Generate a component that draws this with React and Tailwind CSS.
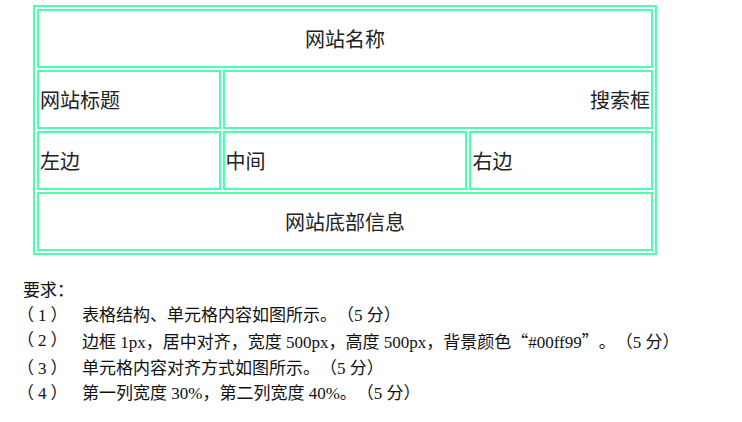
export default function App() {
  const cell = "border-2 border-[#4dffb0] p-0 align-middle";
  const cjk = { fontFamily: '"Noto Sans CJK SC", sans-serif' };
  const reqs = [
    ["（1）", <>表格结构、单元格内容如图所示。（5 分）</>],
    [
      "（2）",
      <>
        边框 1px，居中对齐，宽度 500px，高度 500px，背景颜色
        <span style={cjk}>“</span>#00ff99<span style={cjk}>”</span>。（5 分）
      </>,
    ],
    ["（3）", <>单元格内容对齐方式如图所示。（5 分）</>],
    ["（4）", <>第一列宽度 30%，第二列宽度 40%。（5 分）</>],
  ];

  return (
    <div className="w-[742px] h-[422px] bg-white overflow-hidden">
      {/* 表格 */}
      <div className="pt-[5px] pl-[33px]">
        <table
          className="w-[624px] h-[250px] table-fixed border-separate border-spacing-[2px] border-2 border-[#4dffb0] text-[20px] text-[#222]"
          style={cjk}
        >
          <colgroup>
            <col className="w-[30%]" />
            <col className="w-[40%]" />
            <col className="w-[30%]" />
          </colgroup>
          <tbody>
            <tr>
              <td colSpan="3" className={`${cell} text-center`}>
                网站名称
              </td>
            </tr>
            <tr>
              <td className={`${cell} text-left pl-[1px]`}>网站标题</td>
              <td colSpan="2" className={`${cell} text-right pr-[1px]`}>
                搜索框
              </td>
            </tr>
            <tr>
              <td className={`${cell} text-left pl-[1px]`}>左边</td>
              <td className={`${cell} text-left pl-[1px]`}>中间</td>
              <td className={`${cell} text-left pl-[1px]`}>右边</td>
            </tr>
            <tr>
              <td colSpan="3" className={`${cell} text-center`}>
                网站底部信息
              </td>
            </tr>
          </tbody>
        </table>
      </div>

      {/* 要求 */}
      <div
        className="mt-[23px] pl-[23px] text-[17px] leading-[25.5px] text-[#111] [text-spacing-trim:space-all]"
        style={{ fontFamily: '"Liberation Serif", "Noto Sans CJK SC", serif' }}
      >
        <div className="-mb-px">要求：</div>
        {reqs.map(([n, t]) => (
          <div key={n} className="flex">
            <span className="w-[59px] shrink-0 -ml-[6px] mr-[6px] tracking-[4px]">{n}</span>
            <span>{t}</span>
          </div>
        ))}
      </div>
    </div>
  );
}
